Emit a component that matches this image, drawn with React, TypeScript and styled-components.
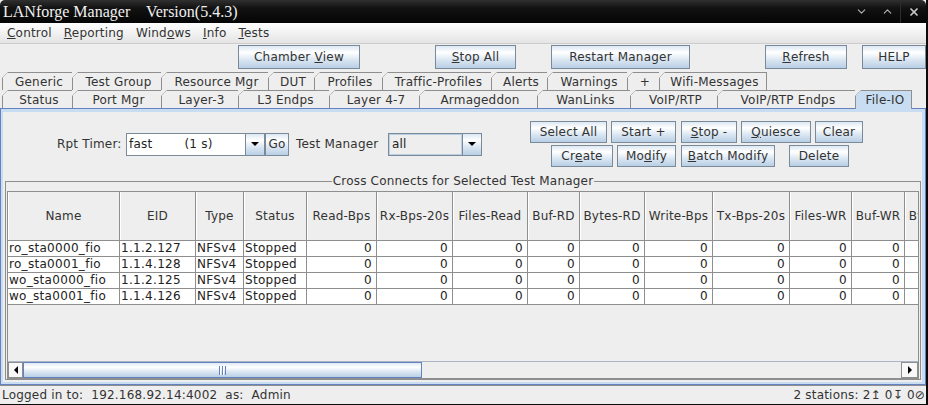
import React from "react";
import styled, { createGlobalStyle } from "styled-components";
import { ChevronDown, ChevronUp, X } from "lucide-react";

const GlobalStyle = createGlobalStyle`
  * { box-sizing: border-box; }
  html, body { margin: 0; padding: 0; }
  body {
    background: #000;
    font-family: "DejaVu Sans", "Noto Sans", sans-serif;
    font-size: 12px;
    letter-spacing: 0.2px;
    color: #333;
  }
`;

const LINE = "#8e8e8e";
const BTN_BORDER = "#7a8a99";
const OCEAN = "linear-gradient(#dde8f3 0%, #ffffff 30%, #dde8f3 60%, #b8cfe5 100%)";

const Frame = styled.div`
  width: 928px;
  height: 405px;
  display: flex;
  flex-direction: column;
  overflow: hidden;
  background: #eeeeee;
  border-right: 2px solid #0b0b0b;
  border-bottom: 1px solid #0b0b0b;
`;

const TitleBar = styled.div`
  flex: none;
  height: 23px;
  display: flex;
  align-items: center;
  padding-left: 3px;
  background: linear-gradient(#303030, #121212 35%, #050505);
  border-radius: 5px 5px 0 0;
`;

const Title = styled.span`
  flex: 1;
  font-family: "Liberation Serif", serif;
  font-size: 16px;
  letter-spacing: 0;
  color: #f0f0f0;
  white-space: pre;
`;

const WinButton = styled.span<{ $w: number }>`
  width: ${(p) => p.$w}px;
  height: 23px;
  display: flex;
  align-items: center;
  justify-content: center;
  color: #b5b5b5;
`;

const WinSep = styled.span`
  width: 1px;
  height: 23px;
  background: #2c2c2c;
`;

const MenuBar = styled.div`
  flex: none;
  height: 21px;
  display: flex;
  align-items: center;
  padding-left: 1px;
  background: linear-gradient(#ffffff, #e4e4e4);
  border-bottom: 1px solid #cccccc;
`;

const MenuItem = styled.span`
  padding: 0 6px;
  line-height: 20px;
`;

const Mn = styled.span`
  text-decoration: underline;
  text-underline-offset: 1px;
`;

const Toolbar = styled.div`
  flex: none;
  height: 27px;
  display: flex;
  align-items: flex-start;
  padding: 1px 0 0 238px;
`;

const Btn = styled.button<{ $w: number; $h?: number; $ml?: number }>`
  flex: none;
  width: ${(p) => p.$w}px;
  height: ${(p) => p.$h ?? 22}px;
  margin: 0 0 0 ${(p) => p.$ml ?? 0}px;
  padding: 0;
  border: 1px solid ${BTN_BORDER};
  border-radius: 0;
  background: ${OCEAN};
  font-family: "DejaVu Sans", sans-serif;
  font-size: 12px;
  letter-spacing: 0.2px;
  color: #333;
  display: flex;
  align-items: center;
  justify-content: center;
  white-space: pre;
`;

const TabArea = styled.div`
  flex: none;
  height: 37px;
  padding: 1px 0 0 2px;
  display: flex;
  flex-direction: column;
`;

const TabRow = styled.div`
  display: flex;
  height: 18px;
  align-items: flex-start;
`;

const Tab = styled.div<{ $w: number; $sel?: boolean; $last?: boolean }>`
  position: relative;
  z-index: ${(p) => (p.$sel ? 1 : 0)};
  flex: none;
  width: ${(p) => p.$w}px;
  height: ${(p) => (p.$sel ? 19 : 18)}px;
  display: flex;
  align-items: center;
  justify-content: center;
  padding-left: 3px;
  border-top: 1px solid ${LINE};
  border-left: 1px solid ${LINE};
  border-right: ${(p) => (p.$last ? `1px solid ${LINE}` : "none")};
  background: linear-gradient(
      135deg,
      transparent 3.7px,
      ${LINE} 3.7px,
      ${LINE} 4.8px,
      ${(p) => (p.$sel ? "#c8ddf2" : "#eeeeee")} 4.8px
    )
    border-box;
  clip-path: polygon(6px 0, 100% 0, 100% 100%, 0 100%, 0 6px);
  white-space: nowrap;
`;

const Panel = styled.div`
  flex: none;
  height: 277px;
  border: 1px solid #6382bf;
  background: #c8ddf2;
  padding: 3px 3px 2px 2px;
`;

const PanelInner = styled.div`
  height: 100%;
  background: #eeeeee;
  display: flex;
  flex-direction: column;
`;

const Controls = styled.div`
  flex: none;
  height: 62px;
  display: flex;
  align-items: center;
  padding: 2px 0 0 54px;
`;

const Label = styled.span<{ $w: number; $ml?: number }>`
  flex: none;
  width: ${(p) => p.$w}px;
  margin-left: ${(p) => p.$ml ?? 0}px;
  white-space: nowrap;
`;

const Combo = styled.div<{ $w: number }>`
  flex: none;
  width: ${(p) => p.$w}px;
  height: 23px;
  display: flex;
  border: 1px solid ${BTN_BORDER};
`;

const ComboField = styled.div<{ $editable?: boolean }>`
  flex: 1;
  display: flex;
  align-items: center;
  padding-left: 2px;
  white-space: pre;
  color: #222;
  background: ${(p) => (p.$editable ? "#ffffff" : "#eeeeee")};
  border: ${(p) => (p.$editable ? "none" : "1px solid #b8cfe5")};
`;

const ComboArrow = styled.div`
  flex: none;
  width: 19px;
  display: flex;
  align-items: center;
  justify-content: center;
  border-left: 1px solid ${BTN_BORDER};
  background: ${OCEAN};
`;

const DownTri = styled.span`
  width: 0;
  height: 0;
  border-left: 4px solid transparent;
  border-right: 4px solid transparent;
  border-top: 4px solid #000;
`;

const ButtonBlock = styled.div`
  flex: none;
  display: flex;
  flex-direction: column;
  gap: 2px;
  margin-left: 48px;
`;

const ButtonRow = styled.div<{ $indent?: number }>`
  display: flex;
  padding-left: ${(p) => p.$indent ?? 0}px;
`;

const Group = styled.fieldset`
  margin: 0 1px 0 2px;
  min-width: 0;
  padding: 3px 1px 0 1px;
  border: 1px solid ${LINE};
`;

const GroupTitle = styled.legend`
  margin: 0 auto;
  padding: 0 1px;
  line-height: 14px;
  font-size: 12px;
`;

const ScrollPane = styled.div`
  height: 188px;
  border: 1px solid ${LINE};
  display: flex;
  flex-direction: column;
  overflow: hidden;
`;

const Viewport = styled.div`
  flex: 1;
  overflow: hidden;
  background: #eeeeee;
`;

const GridRow = styled.div<{ $cols: string }>`
  display: grid;
  grid-template-columns: ${(p) => p.$cols};
  width: max-content;
`;

const HeadCell = styled.div`
  height: 49px;
  display: flex;
  align-items: center;
  justify-content: center;
  border-right: 1px solid ${LINE};
  border-bottom: 1px solid ${LINE};
  box-shadow: inset 1px 0 0 #ffffff;
  white-space: nowrap;
  overflow: hidden;
`;

const Cell = styled.div<{ $right?: boolean }>`
  height: 16px;
  line-height: 15px;
  padding: ${(p) => (p.$right ? "0 4px 0 0" : "0 0 0 1px")};
  text-align: ${(p) => (p.$right ? "right" : "left")};
  letter-spacing: 0.3px;
  background: #ffffff;
  color: #222;
  border-right: 1px solid ${LINE};
  border-bottom: 1px solid ${LINE};
  white-space: nowrap;
  overflow: hidden;
`;

const ScrollBar = styled.div`
  flex: none;
  height: 17px;
  display: flex;
  border-top: 1px solid #a9b5c2;
  background: #eeeeee;
`;

const ScrollArrow = styled.div<{ $w: number }>`
  flex: none;
  width: ${(p) => p.$w}px;
  display: flex;
  align-items: center;
  justify-content: center;
  background: #f8f8f8;
  border: 1px solid ${LINE};
`;

const SideTri = styled.span<{ $dir: "left" | "right" }>`
  width: 0;
  height: 0;
  border-top: 4px solid transparent;
  border-bottom: 4px solid transparent;
  ${(p) => (p.$dir === "left" ? "border-right: 4px solid #000;" : "border-left: 4px solid #000;")}
`;

const Track = styled.div`
  flex: 1;
`;

const Thumb = styled.div`
  flex: none;
  display: flex;
  align-items: center;
  justify-content: center;
  border: 1px solid #6382bf;
  background: ${OCEAN};
`;

const Grip = styled.span`
  width: 7px;
  height: 9px;
  background: repeating-linear-gradient(90deg, #6382bf 0 1px, #ffffff 1px 2px, transparent 2px 3px);
`;

const StatusBar = styled.div`
  flex: none;
  height: 19px;
  display: flex;
  align-items: center;
  justify-content: space-between;
  padding: 0 1px 0 2px;
  border-top: 1px solid ${LINE};
  white-space: pre;
`;

const row1Tabs: [string, number][] = [
  ["Generic", 70],
  ["Test Group", 89],
  ["Resource Mgr", 107],
  ["DUT", 46],
  ["Profiles", 68],
  ["Traffic-Profiles", 109],
  ["Alerts", 56],
  ["Warnings", 80],
  ["+", 32],
  ["Wifi-Messages", 108],
];

const row2Tabs: [string, number][] = [
  ["Status", 70],
  ["Port Mgr", 89],
  ["Layer-3", 77],
  ["L3 Endps", 91],
  ["Layer 4-7", 90],
  ["Armageddon", 118],
  ["WanLinks", 93],
  ["VoIP/RTP", 87],
  ["VoIP/RTP Endps", 138],
  ["File-IO", 57],
];

const columns: { name: string; w: number; num: boolean }[] = [
  { name: "Name", w: 112, num: false },
  { name: "EID", w: 76, num: false },
  { name: "Type", w: 48, num: false },
  { name: "Status", w: 63, num: false },
  { name: "Read-Bps", w: 70, num: true },
  { name: "Rx-Bps-20s", w: 76, num: true },
  { name: "Files-Read", w: 75, num: true },
  { name: "Buf-RD", w: 52, num: true },
  { name: "Bytes-RD", w: 65, num: true },
  { name: "Write-Bps", w: 68, num: true },
  { name: "Tx-Bps-20s", w: 77, num: true },
  { name: "Files-WR", w: 62, num: true },
  { name: "Buf-WR", w: 53, num: true },
  { name: "Bytes-WR", w: 68, num: true },
];

const rows = [
  ["ro_sta0000_fio", "1.1.2.127", "NFSv4", "Stopped"],
  ["ro_sta0001_fio", "1.1.4.128", "NFSv4", "Stopped"],
  ["wo_sta0000_fio", "1.1.2.125", "NFSv4", "Stopped"],
  ["wo_sta0001_fio", "1.1.4.126", "NFSv4", "Stopped"],
];

const colTemplate = columns.map((c) => `${c.w}px`).join(" ");

// horizontal scrollbar: visible part of the full table decides thumb size
// (the columns past Bytes-WR are not drawn, only counted)
const VIEW_W = 910;
const TRACK_W = VIEW_W - 15 - 17;
const TABLE_W = columns.reduce((s, c) => s + c.w, 0) + 1037;
const thumbW = Math.round((TRACK_W * VIEW_W) / TABLE_W);

const App: React.FC = () => {
  return (
    <>
      <GlobalStyle />
      <Frame>
        <TitleBar>
          <Title>{"LANforge Manager    Version(5.4.3)"}</Title>
          <WinButton $w={26}>
            <ChevronDown size={13} strokeWidth={2} />
          </WinButton>
          <WinButton $w={26}>
            <ChevronUp size={13} strokeWidth={2} />
          </WinButton>
          <WinSep />
          <WinButton $w={25}>
            <X size={12} strokeWidth={3.5} color="#c8c8c8" />
          </WinButton>
        </TitleBar>

        <MenuBar>
          <MenuItem>
            <Mn>C</Mn>ontrol
          </MenuItem>
          <MenuItem>
            <Mn>R</Mn>eporting
          </MenuItem>
          <MenuItem>
            Wind<Mn>o</Mn>ws
          </MenuItem>
          <MenuItem>
            <Mn>I</Mn>nfo
          </MenuItem>
          <MenuItem>
            <Mn>T</Mn>ests
          </MenuItem>
        </MenuBar>

        <Toolbar>
          <Btn $w={122} $h={24}>
            Chamber <Mn>V</Mn>iew
          </Btn>
          <Btn $w={81} $h={24} $ml={75}>
            <Mn>S</Mn>top All
          </Btn>
          <Btn $w={139} $h={24} $ml={35}>
            Restart Manager
          </Btn>
          <Btn $w={82} $h={24} $ml={75}>
            <Mn>R</Mn>efresh
          </Btn>
          <Btn $w={64} $h={24} $ml={15}>
            HELP
          </Btn>
        </Toolbar>

        <TabArea>
          <TabRow>
            {row1Tabs.map(([t, w], i) => (
              <Tab key={t} $w={w} $last={i === row1Tabs.length - 1}>
                {t}
              </Tab>
            ))}
          </TabRow>
          <TabRow>
            {row2Tabs.map(([t, w], i) => (
              <Tab key={t} $w={w} $sel={t === "File-IO"} $last={i === row2Tabs.length - 1}>
                {t}
              </Tab>
            ))}
          </TabRow>
        </TabArea>

        <Panel>
          <PanelInner>
            <Controls>
              <Label $w={69}>Rpt Timer:</Label>
              <Combo $w={139}>
                <ComboField $editable>{"fast        (1 s)"}</ComboField>
                <ComboArrow>
                  <DownTri />
                </ComboArrow>
              </Combo>
              <Btn $w={24} $h={23}>
                Go
              </Btn>
              <Label $w={92} $ml={7}>
                Test Manager
              </Label>
              <Combo $w={94}>
                <ComboField>all</ComboField>
                <ComboArrow>
                  <DownTri />
                </ComboArrow>
              </Combo>
              <ButtonBlock>
                <ButtonRow>
                  <Btn $w={77}>Select All</Btn>
                  <Btn $w={65} $ml={4}>
                    Start +
                  </Btn>
                  <Btn $w={56} $ml={5}>
                    <Mn>S</Mn>top -
                  </Btn>
                  <Btn $w={70} $ml={4}>
                    <Mn>Q</Mn>uiesce
                  </Btn>
                  <Btn $w={48} $ml={4}>
                    Clear
                  </Btn>
                </ButtonRow>
                <ButtonRow $indent={21}>
                  <Btn $w={62}>
                    Cr<Mn>e</Mn>ate
                  </Btn>
                  <Btn $w={59} $ml={4}>
                    Mo<Mn>d</Mn>ify
                  </Btn>
                  <Btn $w={94} $ml={5}>
                    <Mn>B</Mn>atch Modify
                  </Btn>
                  <Btn $w={60} $ml={14}>
                    Delete
                  </Btn>
                </ButtonRow>
              </ButtonBlock>
            </Controls>

            <Group>
              <GroupTitle>Cross Connects for Selected Test Manager</GroupTitle>
              <ScrollPane>
                <Viewport>
                  <GridRow $cols={colTemplate}>
                    {columns.map((c) => (
                      <HeadCell key={c.name}>{c.name}</HeadCell>
                    ))}
                  </GridRow>
                  {rows.map((r) => (
                    <GridRow key={r[0]} $cols={colTemplate}>
                      {columns.map((c, i) => (
                        <Cell key={c.name} $right={c.num}>
                          {c.num ? "0" : r[i]}
                        </Cell>
                      ))}
                    </GridRow>
                  ))}
                </Viewport>
                <ScrollBar>
                  <ScrollArrow $w={15}>
                    <SideTri $dir="left" />
                  </ScrollArrow>
                  <Thumb style={{ width: thumbW }}>
                    <Grip />
                  </Thumb>
                  <Track />
                  <ScrollArrow $w={17}>
                    <SideTri $dir="right" />
                  </ScrollArrow>
                </ScrollBar>
              </ScrollPane>
            </Group>
          </PanelInner>
        </Panel>

        <StatusBar>
          <span>{"Logged in to:  192.168.92.14:4002  as:  Admin"}</span>
          <span>{"2 stations: 2\u21a5 0\u21a7 0\u2298"}</span>
        </StatusBar>
      </Frame>
    </>
  );
};

export default App;
